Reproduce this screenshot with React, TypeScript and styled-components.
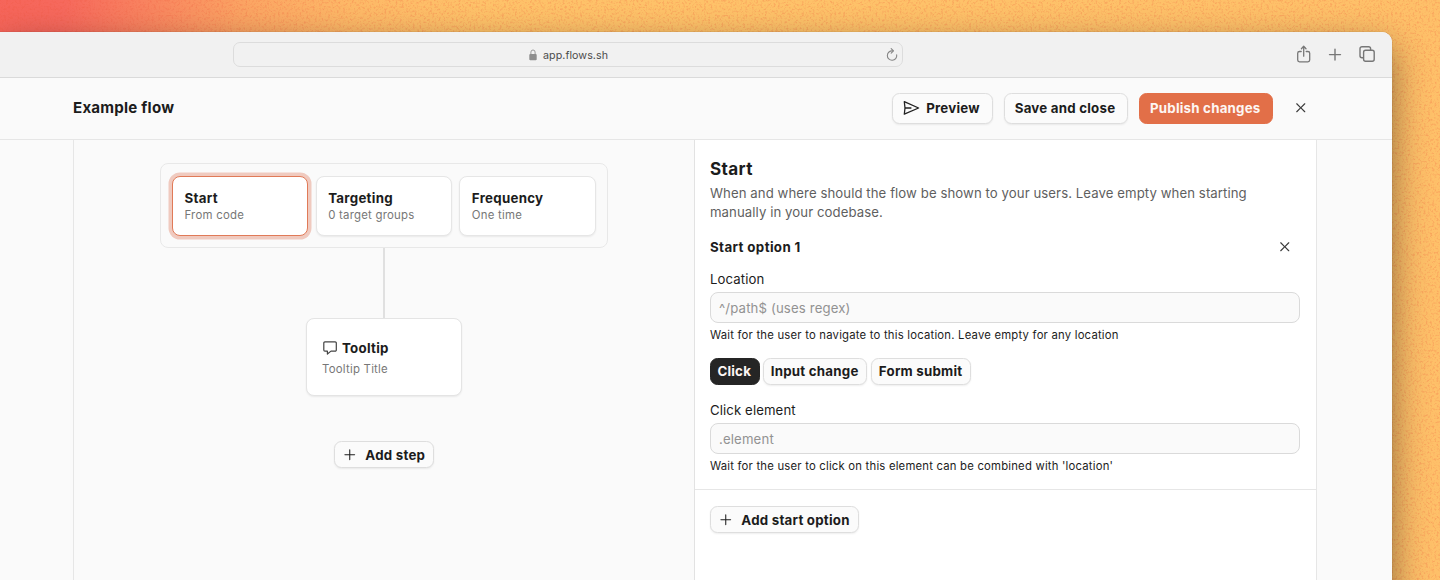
import React from "react";
import styled, { createGlobalStyle } from "styled-components";
import { RxPlus, RxCross2 } from "react-icons/rx";

const GlobalStyle = createGlobalStyle`
  *, *::before, *::after { box-sizing: border-box; }
  body {
    margin: 0;
    overflow: hidden;
    font-family: Inter, "Liberation Sans", sans-serif;
    color: #1c1c1c;
    -webkit-font-smoothing: antialiased;
  }
  button, input { font-family: inherit; }
`;

const Desktop = styled.div`
  position: relative;
  width: 1440px;
  height: 580px;
  overflow: hidden;
  padding-top: 32px;
  background: linear-gradient(99deg, #f6655a 0, #f6695d 65px, #f98a60 165px, #fba563 245px, #fdb967 350px, #fec269 480px, #fec269 800px, #fec069 100%);
`;

const Grain = styled.svg`
  position: absolute;
  inset: 0;
  width: 100%;
  height: 100%;
`;

const WindowShadow = styled.div`
  width: 1392px;
  border-radius: 0 10px 0 0;
  position: relative;
  box-shadow: 0 0 1px rgba(0, 0, 0, 0.45), 0 14px 36px rgba(0, 0, 0, 0.44);
`;

const BrowserWindow = styled.div`
  position: relative;
  width: 1392px;
  height: 620px;
  display: flex;
  flex-direction: column;
  background: #fafafa;
  border-radius: 0 10px 0 0;
  overflow: hidden;
`;

const Chrome = styled.div`
  flex: none;
  height: 46px;
  display: flex;
  align-items: center;
  padding-left: 233px;
  background: #f1f1f1;
  border-bottom: 1px solid #dadada;
`;

const AddressBar = styled.div`
  width: 670px;
  height: 25px;
  display: flex;
  align-items: center;
  border: 1px solid #dcdcdc;
  border-radius: 7px;
  padding: 0 4px 0 295px;
  color: #4c4c4c;
  font-size: 10.7px;
`;

const Address = styled.span`
  flex: 1;
  margin-left: 6px;
  padding-top: 1px;
  letter-spacing: 0.06px;
`;

const ChromeActions = styled.div`
  display: flex;
  align-items: center;
  margin-left: 393px;
  gap: 15px;
`;

const Header = styled.header`
  flex: none;
  height: 62px;
  display: flex;
  align-items: center;
  padding: 0 75px 1px 73px;
  border-bottom: 1px solid #e6e6e6;
`;

const FlowTitle = styled.h1`
  flex: 1;
  margin: 0;
  font-size: 15.1px;
  line-height: 22px;
  font-weight: 700;
  letter-spacing: 0.22px;
`;

const HeaderActions = styled.div`
  display: flex;
  align-items: center;
  gap: 11px;
`;

const Button = styled.button<{
  $w: number;
  $tone?: "plain" | "primary" | "dark";
  $small?: boolean;
}>`
  flex: none;
  width: ${(p) => p.$w}px;
  height: ${(p) => (p.$small ? 27 : 31)}px;
  display: flex;
  align-items: center;
  justify-content: center;
  padding: 0 1px 0 0;
  border-radius: 7.5px;
  border: 1px solid
    ${(p) => (p.$tone === "primary" ? "#e26f48" : p.$tone === "dark" ? "#252525" : "#dedede")};
  background: ${(p) =>
    p.$tone === "primary" ? "#e26f48" : p.$tone === "dark" ? "#252525" : "#fbfbfb"};
  color: ${(p) => (p.$tone && p.$tone !== "plain" ? "#fdf6f3" : "#1c1c1c")};
  box-shadow: ${(p) =>
    p.$tone && p.$tone !== "plain" ? "none" : "0 1px 2px rgba(0, 0, 0, 0.07)"};
  font-size: 13.3px;
  font-weight: 700;
  letter-spacing: 0.22px;
  white-space: nowrap;
  svg { flex: none; }
`;

const ButtonLabel = styled.span<{ $gap: number }>`
  margin-left: ${(p) => p.$gap}px;
`;

const IconButton = styled.button`
  width: 32px;
  height: 31px;
  display: grid;
  place-items: center;
  padding: 0;
  border: 0;
  background: none;
  color: #3c3c3c;
`;

const HeaderClose = styled(IconButton)`
  margin-left: 1px;
`;

const Main = styled.main`
  flex: 1;
  display: flex;
  width: 1244px;
  margin-left: 73px;
  border: solid #e6e6e6;
  border-width: 0 1px;
`;

const Canvas = styled.section`
  width: 620px;
  display: flex;
  flex-direction: column;
  align-items: center;
  padding-top: 23px;
`;

const SetupGroup = styled.div`
  display: flex;
  gap: 7.5px;
  width: 448px;
  height: 85px;
  padding: 12px 11.5px 11px 11px;
  border: 1px solid #e8e8e8;
  border-radius: 8px;
`;

const SetupCard = styled.div<{ $active?: boolean }>`
  flex: 1;
  height: 60px;
  padding: 11.5px 0 0 11.5px;
  background: #fff;
  border: 1px solid ${(p) => (p.$active ? "#e07a58" : "#e6e6e6")};
  border-radius: 8px;
  box-shadow: ${(p) =>
    p.$active ? "0 0 0 3.5px #f0cabf" : "0 1px 2px rgba(0, 0, 0, 0.07)"};
`;

const CardTitle = styled.div`
  display: flex;
  align-items: center;
  gap: 4px;
  font-size: 13.3px;
  line-height: 18px;
  font-weight: 700;
  letter-spacing: 0.28px;
`;

const CardNote = styled.div`
  font-size: 11.4px;
  line-height: 16px;
  letter-spacing: 0.23px;
  color: #777;
`;

const Connector = styled.div`
  width: 2px;
  height: 70px;
  background: #e0e0e0;
`;

const StepCard = styled.div`
  width: 156px;
  height: 78px;
  margin-bottom: 45px;
  padding: 20px 15px;
  display: flex;
  flex-direction: column;
  gap: 4px;
  background: #fff;
  border: 1px solid #e4e4e4;
  border-radius: 8px;
  box-shadow: 0 1px 2px rgba(0, 0, 0, 0.07);
`;

const Panel = styled.section`
  flex: 1;
  background: #fff;
  border-left: 1px solid #e2e2e2;
`;

const OptionSection = styled.div`
  height: 350px;
  padding: 17px 16px 0 15px;
  border-bottom: 1px solid #e6e6e6;
`;

const PanelTitle = styled.h2`
  margin: 0;
  font-size: 17.1px;
  line-height: 24px;
  font-weight: 700;
  letter-spacing: 0.35px;
`;

const PanelText = styled.p`
  margin: 3px 0 0;
  font-size: 13.2px;
  line-height: 19.4px;
  letter-spacing: 0.07px;
  color: #5f5f5f;
`;

const OptionHeader = styled.div`
  display: flex;
  align-items: center;
  justify-content: space-between;
  height: 32px;
  margin: 8px -1px 0 0;
`;

const OptionTitle = styled.h3`
  margin: 0;
  font-size: 13.3px;
  font-weight: 700;
  letter-spacing: 0.38px;
`;

const Field = styled.label<{ $mt: number }>`
  display: block;
  margin-top: ${(p) => p.$mt}px;
`;

const FieldLabel = styled.span`
  display: block;
  font-size: 13.2px;
  line-height: 20px;
  letter-spacing: 0.1px;
`;

const TextInput = styled.input`
  display: block;
  width: 590px;
  height: 31px;
  margin-top: 3px;
  padding: 1px 8px 0;
  border: 1px solid #dadada;
  border-radius: 8px;
  background: #fafafa;
  font-size: 13.2px;
  letter-spacing: 0.14px;
  outline: none;
  &::placeholder { color: #929292; opacity: 1; }
`;

const Help = styled.span`
  display: block;
  margin-top: 4px;
  font-size: 11.3px;
  line-height: 16px;
  letter-spacing: 0.21px;
`;

const TriggerTabs = styled.div`
  display: flex;
  gap: 3.7px;
  margin-top: 15px;
`;

const AddRow = styled.div`
  padding: 16px 15px;
`;

const LockIcon = () => (
  <svg width="8" height="12" viewBox="0 0 8 12" fill="none">
    <rect x="0.3" y="5" width="7.4" height="6.3" rx="1" fill="#8e8e8e" />
    <path d="M1.9 5V3.1a2.1 2.1 0 0 1 4.2 0V5" stroke="#999" strokeWidth="1" />
  </svg>
);

const ReloadIcon = () => (
  <svg width="12" height="14" viewBox="0 0 12 14" fill="none" stroke="#858585" strokeWidth="1.1" strokeLinecap="round" strokeLinejoin="round">
    <path d="M10.7 6.9A4.7 4.7 0 1 1 6.6 2.9" />
    <path d="M5.2 0.7L7.5 2.9L5.2 5.2" />
  </svg>
);

const ShareIcon = () => (
  <svg width="16" height="20" viewBox="0 0 16 20" fill="none" stroke="#777" strokeWidth="1.3" strokeLinecap="round" strokeLinejoin="round">
    <path d="M5.2 6.5H3.5A1.8 1.8 0 0 0 1.7 8.3v6.8a1.8 1.8 0 0 0 1.8 1.8h8.4a1.8 1.8 0 0 0 1.8-1.8V8.3a1.8 1.8 0 0 0-1.8-1.8h-1.7" />
    <path d="M7.7 11.2V1.6M5.4 3.7L7.7 1.3L10 3.7" />
  </svg>
);

const NewTabIcon = () => (
  <svg width="16" height="20" viewBox="0 0 16 20" fill="none" stroke="#777" strokeWidth="1.4" strokeLinecap="round">
    <path d="M8 4.1v11M2.5 9.6h11" />
  </svg>
);

const TabsIcon = () => (
  <svg width="18" height="20" viewBox="0 0 18 20" fill="none" stroke="#777" strokeWidth="1.4" strokeLinejoin="round">
    <rect x="5.6" y="5.3" width="10.6" height="11" rx="2" />
    <path d="M5.6 12.7H4a2 2 0 0 1-2-2V3.7a2 2 0 0 1 2-2h6.6a2 2 0 0 1 2 2v1.6" />
  </svg>
);

const PlaneIcon = () => (
  <svg width="17" height="16" viewBox="0 0 17 16" fill="none" stroke="#222" strokeWidth="1.3" strokeLinejoin="round">
    <path d="M1.3 1.6L15.6 8L1.3 14.2L2 8Z" />
    <path d="M2 8H8.4" />
  </svg>
);

const BubbleIcon = () => (
  <svg width="16" height="16" viewBox="0 0 16 16" fill="none" stroke="#444" strokeWidth="1.2" strokeLinejoin="round">
    <path d="M2.9 1.9H13.2a1.1 1.1 0 0 1 1.1 1.1V10a1.1 1.1 0 0 1-1.1 1.1H9L5.4 14V11.1H2.9A1.1 1.1 0 0 1 1.8 10V3A1.1 1.1 0 0 1 2.9 1.9Z" />
  </svg>
);

export default function App() {
  return (
    <>
      <GlobalStyle />
      <Desktop>
        <Grain aria-hidden="true">
          <filter id="grain" x="0" y="0" width="100%" height="100%" colorInterpolationFilters="sRGB">
            <feTurbulence type="fractalNoise" baseFrequency="0.46" numOctaves={3} seed={4} />
            <feColorMatrix values="0 0 0 0 0.93  0 0 0 0 0.33  0 0 0 0 0.22  3.4 0 0 0 -1.65" />
          </filter>
          <rect width="100%" height="100%" filter="url(#grain)" opacity="0.23" />
        </Grain>
        <WindowShadow>
          <BrowserWindow>
            <Chrome>
              <AddressBar>
                <LockIcon />
                <Address>app.flows.sh</Address>
                <ReloadIcon />
              </AddressBar>
              <ChromeActions>
                <ShareIcon />
                <NewTabIcon />
                <TabsIcon />
              </ChromeActions>
            </Chrome>
            <Header>
              <FlowTitle>Example flow</FlowTitle>
              <HeaderActions>
                <Button $w={101}>
                  <PlaneIcon />
                  <ButtonLabel $gap={6}>Preview</ButtonLabel>
                </Button>
                <Button $w={124}>Save and close</Button>
                <Button $w={134.5} $tone="primary">Publish changes</Button>
                <HeaderClose aria-label="Close editor"><RxCross2 size={15.5} /></HeaderClose>
              </HeaderActions>
            </Header>
            <Main>
              <Canvas>
                <SetupGroup>
                  <SetupCard $active>
                    <CardTitle>Start</CardTitle>
                    <CardNote>From code</CardNote>
                  </SetupCard>
                  <SetupCard>
                    <CardTitle>Targeting</CardTitle>
                    <CardNote>0 target groups</CardNote>
                  </SetupCard>
                  <SetupCard>
                    <CardTitle>Frequency</CardTitle>
                    <CardNote>One time</CardNote>
                  </SetupCard>
                </SetupGroup>
                <Connector />
                <StepCard>
                  <CardTitle><BubbleIcon />Tooltip</CardTitle>
                  <CardNote>Tooltip Title</CardNote>
                </StepCard>
                <Button $w={100} $small>
                  <RxPlus size={15.5} />
                  <ButtonLabel $gap={8}>Add step</ButtonLabel>
                </Button>
              </Canvas>
              <Panel>
                <OptionSection>
                  <PanelTitle>Start</PanelTitle>
                  <PanelText>
                    When and where should the flow be shown to your users. Leave empty when starting
                    <br />
                    manually in your codebase.
                  </PanelText>
                  <OptionHeader>
                    <OptionTitle>Start option 1</OptionTitle>
                    <IconButton aria-label="Remove option"><RxCross2 size={15.5} /></IconButton>
                  </OptionHeader>
                  <Field $mt={6}>
                    <FieldLabel>Location</FieldLabel>
                    <TextInput placeholder="^/path$ (uses regex)" />
                    <Help>Wait for the user to navigate to this location. Leave empty for any location</Help>
                  </Field>
                  <TriggerTabs>
                    <Button $w={49.5} $small $tone="dark">Click</Button>
                    <Button $w={104} $small>Input change</Button>
                    <Button $w={100.5} $small>Form submit</Button>
                  </TriggerTabs>
                  <Field $mt={15}>
                    <FieldLabel>Click element</FieldLabel>
                    <TextInput placeholder=".element" />
                    <Help>Wait for the user to click on this element can be combined with 'location'</Help>
                  </Field>
                </OptionSection>
                <AddRow>
                  <Button $w={148.5} $small>
                    <RxPlus size={15.5} />
                    <ButtonLabel $gap={8}>Add start option</ButtonLabel>
                  </Button>
                </AddRow>
              </Panel>
            </Main>
          </BrowserWindow>
        </WindowShadow>
      </Desktop>
    </>
  );
}
